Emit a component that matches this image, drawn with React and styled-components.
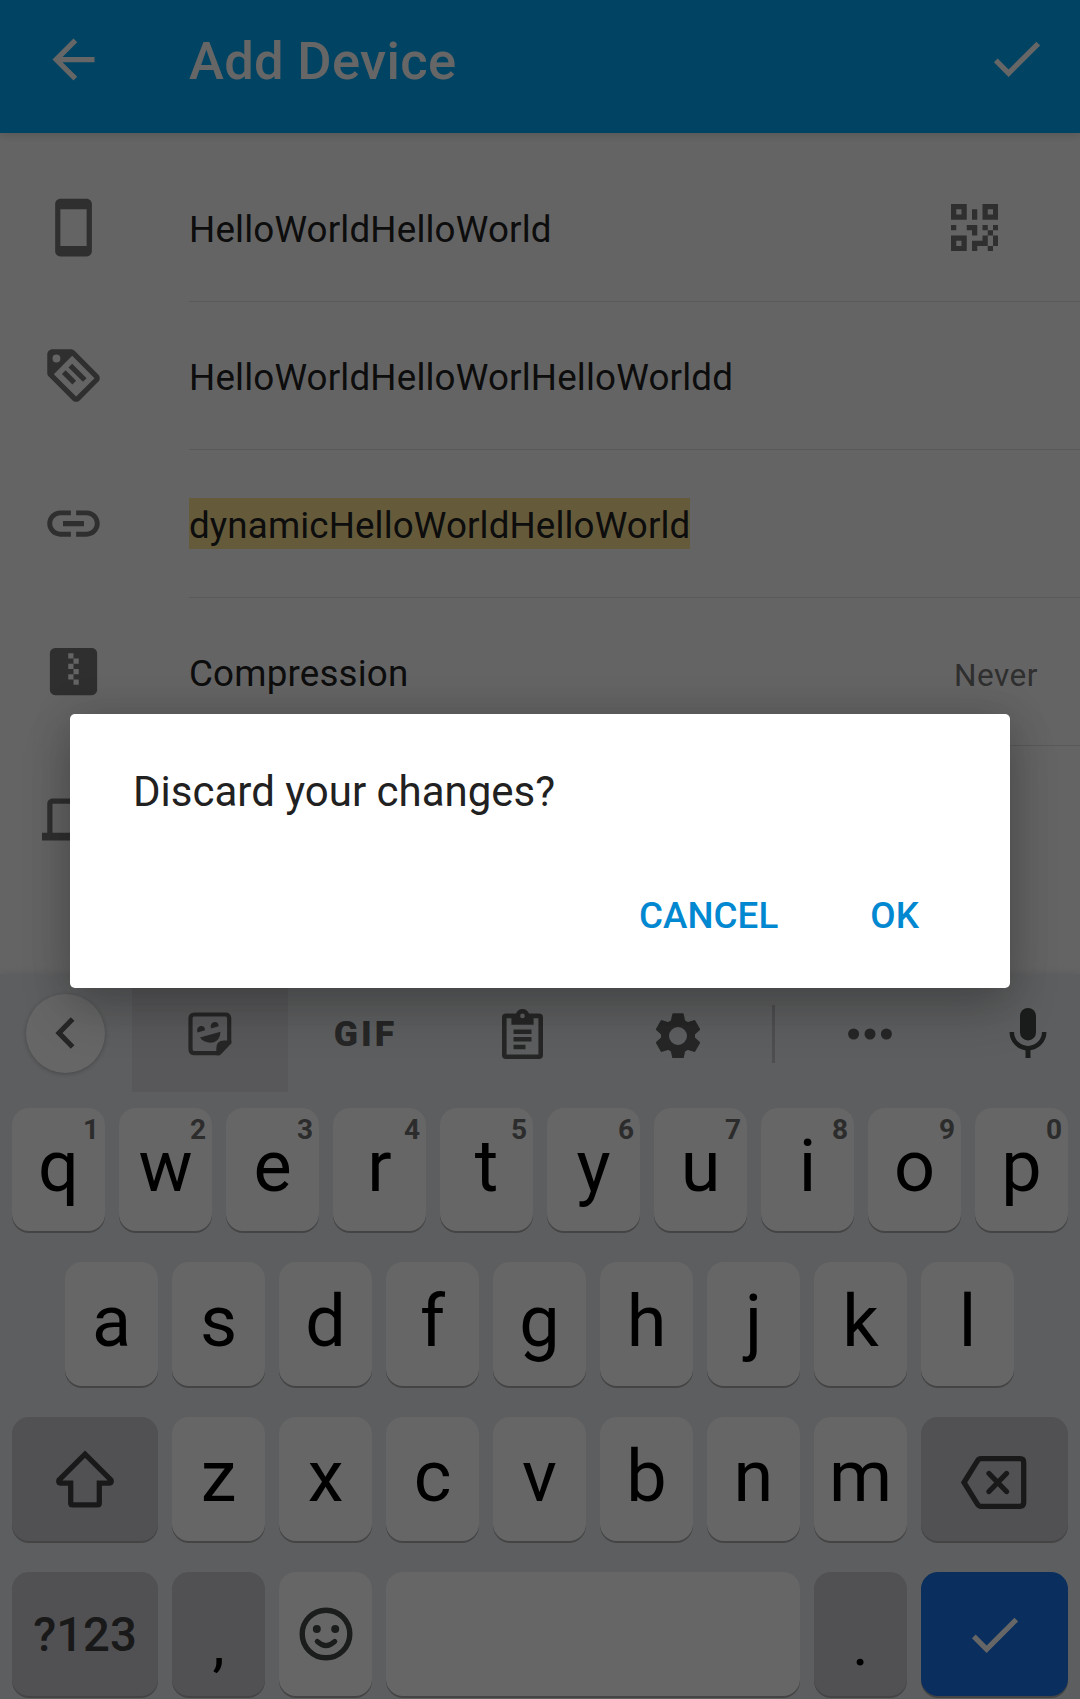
import React from "react";
import styled, { createGlobalStyle } from "styled-components";

const GlobalStyle = createGlobalStyle`
  *, *::before, *::after { box-sizing: border-box; }
  body { margin: 0; font-family: Roboto, "Noto Sans", sans-serif; }
  button { font: inherit; border: 0; padding: 0; margin: 0; background: none; }
  svg { display: block; flex: none; }
`;

const Screen = styled.div`
  position: relative;
  width: 1080px;
  height: 1699px;
  overflow: hidden;
  display: flex;
  flex-direction: column;
  background: #fafafa;
  color: #212121;
`;

const AppBar = styled.header`
  z-index: 1;
  flex: none;
  display: flex;
  align-items: center;
  height: 133px;
  padding: 0 32px 15px 42px;
  background: #03a9f4;
  color: #fff;
  box-shadow: 0 2px 9px rgba(0, 0, 0, 0.14);
`;

const ConfirmSlot = styled.div`
  padding-bottom: 1px;
`;

const Title = styled.h1`
  flex: 1;
  margin: 0;
  padding: 4px 0 0 84px;
  font-size: 52.5px;
  font-weight: 500;
  line-height: 62px;
  letter-spacing: 0.33px;
`;

const Form = styled.main`
  flex: 1;
  min-height: 0;
  padding-top: 21px;
`;

const Field = styled.div`
  display: flex;
  height: 148px;
  padding-left: 42px;
  color: #757575;
`;

const FieldIcon = styled.div`
  display: flex;
  align-items: center;
  width: 147px;
  height: 147px;
`;

const FieldBody = styled.div`
  flex: 1;
  display: flex;
  align-items: center;
  justify-content: space-between;
  padding-right: ${(p) => p.$end || 42}px;
  border-bottom: 1px solid ${(p) => (p.$last ? "transparent" : "#dedede")};
`;

const FieldText = styled.span`
  padding-top: 5px;
  font-size: 36.75px;
  line-height: 46px;
  letter-spacing: ${(p) => p.$track || 0.17}px;
  color: #212121;
  background: ${(p) => (p.$marked ? "#fce494" : "none")};
`;

const FieldValue = styled.span`
  padding-top: 7px;
  font-size: 31.5px;
  letter-spacing: 0.5px;
`;

const Keyboard = styled.section`
  flex: none;
  height: 725px;
  background: #e8eaed;
  box-shadow: 0 0 9px rgba(0, 0, 0, 0.1);
`;

const Toolbar = styled.div`
  display: flex;
  align-items: center;
  height: 118px;
  color: #5c605e;
`;

const BackSlot = styled.div`
  flex: none;
  width: 132px;
  padding-left: 26px;
`;

const RoundButton = styled.button`
  display: flex;
  align-items: center;
  justify-content: center;
  width: 79px;
  height: 79px;
  padding-right: 2px;
  border-radius: 50%;
  background: #fff;
  color: #5c605e;
  box-shadow: 0 1px 4px rgba(0, 0, 0, 0.25);
`;

const Tool = styled.button`
  flex: none;
  display: flex;
  align-items: center;
  justify-content: center;
  width: ${(p) => p.$width || 156}px;
  height: 118px;
  padding-top: 2px;
  padding-right: ${(p) => p.$shift || 0}px;
  background: ${(p) => (p.$active ? "#dbdde0" : "none")};
  color: #5c605e;
`;

const MicTool = styled(Tool)`
  flex: 1;
  padding: 0 0 0 10px;
  color: #444746;
`;

const GifLabel = styled.span`
  font-size: 35.5px;
  font-weight: 900;
  letter-spacing: 3px;
  line-height: 42px;
`;

const ToolDivider = styled.div`
  flex: none;
  width: 3px;
  height: 58px;
  margin: 2px 0 0 16px;
  background: #c2c4c7;
`;

const Keys = styled.div`
  display: grid;
  row-gap: 31px;
  padding: 16px 12px 0;
`;

const KeyRow = styled.div`
  display: flex;
  justify-content: center;
  gap: 14px;
  height: ${(p) => p.$height || 124}px;
  padding-right: ${(p) => (p.$inset ? 1 : 0)}px;
`;

const tones = {
  light: { background: "#fff", color: "#000" },
  grey: { background: "#cbcbd0", color: "#3f4043" },
  blue: { background: "#1a73e8", color: "#fff" },
};

const Key = styled.button`
  position: relative;
  display: flex;
  align-items: center;
  justify-content: center;
  flex: ${(p) => (p.$grow ? "1 1 0" : `0 0 ${p.$width || 93}px`)};
  height: 100%;
  padding-bottom: ${(p) => (p.$glyph ? 5 : 0)}px;
  border-radius: 17px;
  background: ${(p) => tones[p.$tone || "light"].background};
  color: ${(p) => tones[p.$tone || "light"].color};
  box-shadow: 0 2px 0 #aaabad;
  font-size: 72px;
  line-height: 84px;
`;

const BackspaceKey = styled(Key)`
  padding: 7px 3px 0 0;
`;

const EmojiKey = styled(Key)`
  color: #444746;
`;

const Hint = styled.span`
  position: absolute;
  top: 5px;
  right: 6px;
  font-size: 28px;
  font-weight: 700;
  line-height: 33px;
  color: #6f6f6f;
`;

const SymbolLabel = styled.span`
  font-size: 47.3px;
  font-weight: 500;
  line-height: 56px;
  padding-top: 2px;
`;

const Punctuation = styled.span`
  padding-top: 24px;
  font-size: 62px;
  color: #000;
`;

const Overlay = styled.div`
  position: absolute;
  z-index: 2;
  inset: 0;
  display: flex;
  align-items: center;
  justify-content: center;
  padding-top: 3px;
  background: rgba(0, 0, 0, 0.6);
`;

const Dialog = styled.div`
  display: flex;
  flex-direction: column;
  justify-content: space-between;
  width: 940px;
  height: 274px;
  padding: 53px 70px 40px 63px;
  border-radius: 5px;
  background: #fff;
  box-shadow: 0 0 40px rgba(0, 0, 0, 0.15), 0 22px 50px rgba(0, 0, 0, 0.2);
`;

const Message = styled.p`
  margin: 0;
  font-size: 42px;
  line-height: 50px;
  color: #212121;
`;

const Actions = styled.div`
  display: flex;
  justify-content: flex-end;
`;

const Action = styled.button`
  padding: 0 21px;
  margin-left: 50px;
  font-size: 36.75px;
  font-weight: 500;
  line-height: 64px;
  letter-spacing: 0.06px;
  color: #0288d1;
`;

const Icon = ({ d, size = 63 }) => (
  <svg width={size} height={size} viewBox="0 0 24 24" fill="currentColor">
    <path d={d} />
  </svg>
);

const paths = {
  back: "M20 11H7.83l5.59-5.59L12 4l-8 8 8 8 1.41-1.41L7.83 13H20v-2z",
  check: "M9 16.17L4.83 12l-1.42 1.41L9 19 21 7l-1.41-1.41z",
  phone:
    "M17 1.01L7 1c-1.1 0-1.99.9-1.99 2v18c0 1.1.89 2 1.99 2h10c1.1 0 2-.9 2-2V3c0-1.1-.9-1.99-2-1.99zM17 19H7V5h10v14z",
  tag: "M5.5,7A1.5,1.5 0 0,0 7,5.5A1.5,1.5 0 0,0 5.5,4A1.5,1.5 0 0,0 4,5.5A1.5,1.5 0 0,0 5.5,7M21.41,11.58C21.77,11.94 22,12.44 22,13C22,13.55 21.78,14.05 21.41,14.41L14.41,21.41C14.05,21.77 13.55,22 13,22C12.45,22 11.95,21.77 11.58,21.41L2.59,12.41C2.22,12.05 2,11.55 2,11V4C2,2.89 2.89,2 4,2H11C11.55,2 12.05,2.22 12.41,2.58L21.41,11.58M13,20L20,13L11.5,4.5L4.5,11.5L13,20M10.09,8.91L11.5,7.5L17,13L15.59,14.41L10.09,8.91M7.59,11.41L9,10L13,14L11.59,15.41L7.59,11.41Z",
  link: "M3.9 12c0-1.71 1.39-3.1 3.1-3.1h4V7H7c-2.76 0-5 2.24-5 5s2.24 5 5 5h4v-1.9H7c-1.71 0-3.1-1.39-3.1-3.1zM8 13h8v-2H8v2zm9-6h-4v1.9h4c1.71 0 3.1 1.39 3.1 3.1s-1.39 3.1-3.1 3.1h-4V17h4c2.76 0 5-2.24 5-5s-2.24-5-5-5z",
  zip: "M14,17H12V15H10V13H12V15H14M14,9H12V11H14V13H12V11H10V9H12V7H10V5H12V7H14M19,3H5A2,2 0 0,0 3,5V19A2,2 0 0,0 5,21H19A2,2 0 0,0 21,19V5C21,3.89 20.1,3 19,3Z",
  devices:
    "M4 6h18V4H4c-1.1 0-2 .9-2 2v11H0v3h14v-3H4V6zm19 2h-6c-.55 0-1 .45-1 1v10c0 .55.45 1 1 1h6c.55 0 1-.45 1-1V9c0-.55-.45-1-1-1zm-1 9h-4v-7h4v7z",
};

const QrIcon = () => (
  <svg width="47.25" height="47.25" viewBox="0 0 9 9" fill="currentColor">
    <path
      fillRule="evenodd"
      d="M0 0h3v3h-3zM1 1v1h1v-1zM6 0h3v3h-3zM7 1v1h1v-1zM0 6h3v3h-3zM1 7v1h1v-1zM4 1h1v2h-1zM0 4h1v1h-1zM3 4h2v2h-1v-1h-1zM6 4h1v1h-1zM8 4h1v1h-1zM7 5h1v1h-1zM6 6h1v2h-2v1h-1v-2h2zM8 6h1v2h-1zM7 8h1v1h-1z"
    />
  </svg>
);

const ChevronIcon = () => (
  <svg width="20" height="32" viewBox="0 0 20 32" fill="none" stroke="currentColor" strokeWidth="5.2">
    <path d="M17.6 2L4 16l13.6 14" />
  </svg>
);

const StickerIcon = () => (
  <svg width="44" height="44" viewBox="0 0 44 44">
    <path
      d="M32 41.2H6.5Q2.5 41.2 2.5 37.2V6.5Q2.5 2.5 6.5 2.5H37.2Q41.2 2.5 41.2 6.5V30.5L31 41.2"
      fill="none"
      stroke="currentColor"
      strokeWidth="4.2"
    />
    <path d="M28.3 43.2V36.5Q28.3 28.6 36 28.6H43.2V31.2L31.2 43.2z" fill="currentColor" />
    <path
      d="M9.6 20.4C8 16.6 10.8 14 13.4 14C15.8 14 17.4 16 17 18.3zM23.2 16.4C21.6 12.6 24.4 10 27 10C29.4 10 31 12 30.6 14.3z"
      fill="currentColor"
    />
    <path d="M12 25.6L32.4 19.8C32.4 33.5 16.6 33.2 12 25.6z" fill="currentColor" />
  </svg>
);

const ClipboardIcon = () => (
  <svg width="41" height="50" viewBox="0 0 41 50" fill="currentColor">
    <path
      fillRule="evenodd"
      d="M4 4.6H14C15 1.8 17.4 0 20.5 0S26 1.8 27 4.6H37Q41 4.6 41 8.6V46Q41 50 37 50H4Q0 50 0 46V8.6Q0 4.6 4 4.6zM4.6 9.2V45.4H36.4V9.2H31.6V15.8H9.4V9.2zM20.5 4.6a2.3 2.3 0 1 0 0 4.6a2.3 2.3 0 1 0 0-4.6z"
    />
    <path d="M11.5 20.5h18v4.6h-18zM11.5 28h18v4.6h-18zM11.5 35.7h12v4.6h-12z" />
  </svg>
);

const GearIcon = () => (
  <svg width="48" height="48" viewBox="-24 -26 48 48" fill="currentColor">
    <circle r="13" fill="none" stroke="currentColor" strokeWidth="8" />
    {[0, 60, 120, 180, 240, 300].map((a) => (
      <path
        key={a}
        transform={`rotate(${a})`}
        d="M-7.4 -14L-5.8 -21.6Q-5.6 -22.7 -4.6 -22.7H4.6Q5.6 -22.7 5.8 -21.6L7.4 -14z"
      />
    ))}
  </svg>
);

const MoreIcon = () => (
  <svg width="44" height="12" viewBox="0 0 44 12" fill="currentColor">
    <circle cx="5.6" cy="6" r="5.5" />
    <circle cx="22" cy="6" r="5.5" />
    <circle cx="38.4" cy="6" r="5.5" />
  </svg>
);

const MicIcon = () => (
  <svg width="38" height="50" viewBox="0 0 38 50" fill="currentColor">
    <rect x="11" y="0" width="16" height="32.4" rx="8" />
    <path d="M2.8 24a16.2 16.2 0 0 0 32.4 0" fill="none" stroke="currentColor" strokeWidth="4.5" />
    <rect x="16.5" y="40" width="5" height="10" />
  </svg>
);

const ShiftIcon = () => (
  <svg width="60" height="58" viewBox="0 0 60 58" fill="none" stroke="currentColor" strokeWidth="5.3">
    <path d="M30 4.2L56 30Q57.2 32.7 54.5 33.1H44.3V53.2Q44.3 54.8 42.7 54.8H17.3Q15.7 54.8 15.7 53.2V33.1H5.5Q2.8 32.7 4 30z" />
  </svg>
);

const BackspaceIcon = () => (
  <svg width="67" height="53" viewBox="0 0 67 53" fill="none" stroke="currentColor" strokeWidth="5.3">
    <path d="M4 26.5L17.6 4.6Q18.8 2.7 21 2.7H60Q63.7 2.7 63.7 6.4V46.6Q63.7 50.3 60 50.3H21Q18.8 50.3 17.6 48.4z" />
    <path d="M29 17.5L46.5 35.5M46.5 17.5L29 35.5" strokeLinecap="round" />
  </svg>
);

const SmileIcon = () => (
  <svg width="54" height="54" viewBox="0 0 54 54" fill="currentColor">
    <circle cx="27" cy="27" r="23.8" fill="none" stroke="currentColor" strokeWidth="5.4" />
    <circle cx="17.8" cy="22" r="4" />
    <circle cx="36.2" cy="22" r="4" />
    <path d="M18.2 34.4Q27 42.8 35.8 34.4" fill="none" stroke="currentColor" strokeWidth="5" strokeLinecap="round" />
  </svg>
);

const topRow = [..."qwertyuiop"];

const LetterKey = ({ char, hint }) => (
  <Key $glyph>
    {char}
    {hint && <Hint>{hint}</Hint>}
  </Key>
);

export default function App() {
  return (
    <Screen>
      <GlobalStyle />
      <AppBar>
        <Icon d={paths.back} />
        <Title>Add Device</Title>
        <ConfirmSlot><Icon d={paths.check} /></ConfirmSlot>
      </AppBar>

      <Form>
        <Field>
          <FieldIcon><Icon d={paths.phone} /></FieldIcon>
          <FieldBody $end={82}>
            <FieldText>HelloWorldHelloWorld</FieldText>
            <QrIcon />
          </FieldBody>
        </Field>
        <Field>
          <FieldIcon><Icon d={paths.tag} /></FieldIcon>
          <FieldBody><FieldText>HelloWorldHelloWorlHelloWorldd</FieldText></FieldBody>
        </Field>
        <Field>
          <FieldIcon><Icon d={paths.link} /></FieldIcon>
          <FieldBody><FieldText $marked $track={0.12}>dynamicHelloWorldHelloWorld</FieldText></FieldBody>
        </Field>
        <Field>
          <FieldIcon><Icon d={paths.zip} /></FieldIcon>
          <FieldBody>
            <FieldText $track={0.18}>Compression</FieldText>
            <FieldValue>Never</FieldValue>
          </FieldBody>
        </Field>
        <Field>
          <FieldIcon><Icon d={paths.devices} /></FieldIcon>
          <FieldBody $last />
        </Field>
      </Form>

      <Keyboard>
        <Toolbar>
          <BackSlot><RoundButton><ChevronIcon /></RoundButton></BackSlot>
          <Tool $active $shift={1}><StickerIcon /></Tool>
          <Tool $shift={1}><GifLabel>GIF</GifLabel></Tool>
          <Tool><ClipboardIcon /></Tool>
          <Tool><GearIcon /></Tool>
          <ToolDivider />
          <Tool $width={190}><MoreIcon /></Tool>
          <MicTool><MicIcon /></MicTool>
        </Toolbar>
        <Keys>
          <KeyRow $height={123}>
            {topRow.map((c, i) => (
              <LetterKey key={c} char={c} hint={String((i + 1) % 10)} />
            ))}
          </KeyRow>
          <KeyRow $inset>
            {[..."asdfghjkl"].map((c) => <LetterKey key={c} char={c} />)}
          </KeyRow>
          <KeyRow>
            <Key $tone="grey" $width={146}><ShiftIcon /></Key>
            {[..."zxcvbnm"].map((c) => <LetterKey key={c} char={c} />)}
            <BackspaceKey $tone="grey" $grow><BackspaceIcon /></BackspaceKey>
          </KeyRow>
          <KeyRow>
            <Key $tone="grey" $width={146}><SymbolLabel>?123</SymbolLabel></Key>
            <Key $tone="grey" $glyph><Punctuation>,</Punctuation></Key>
            <EmojiKey><SmileIcon /></EmojiKey>
            <Key $grow aria-label="Space" />
            <Key $tone="grey" $glyph><Punctuation>.</Punctuation></Key>
            <Key $tone="blue" $width={147}><Icon d={paths.check} /></Key>
          </KeyRow>
        </Keys>
      </Keyboard>

      <Overlay>
        <Dialog role="dialog">
          <Message>Discard your changes?</Message>
          <Actions>
            <Action>CANCEL</Action>
            <Action>OK</Action>
          </Actions>
        </Dialog>
      </Overlay>
    </Screen>
  );
}
